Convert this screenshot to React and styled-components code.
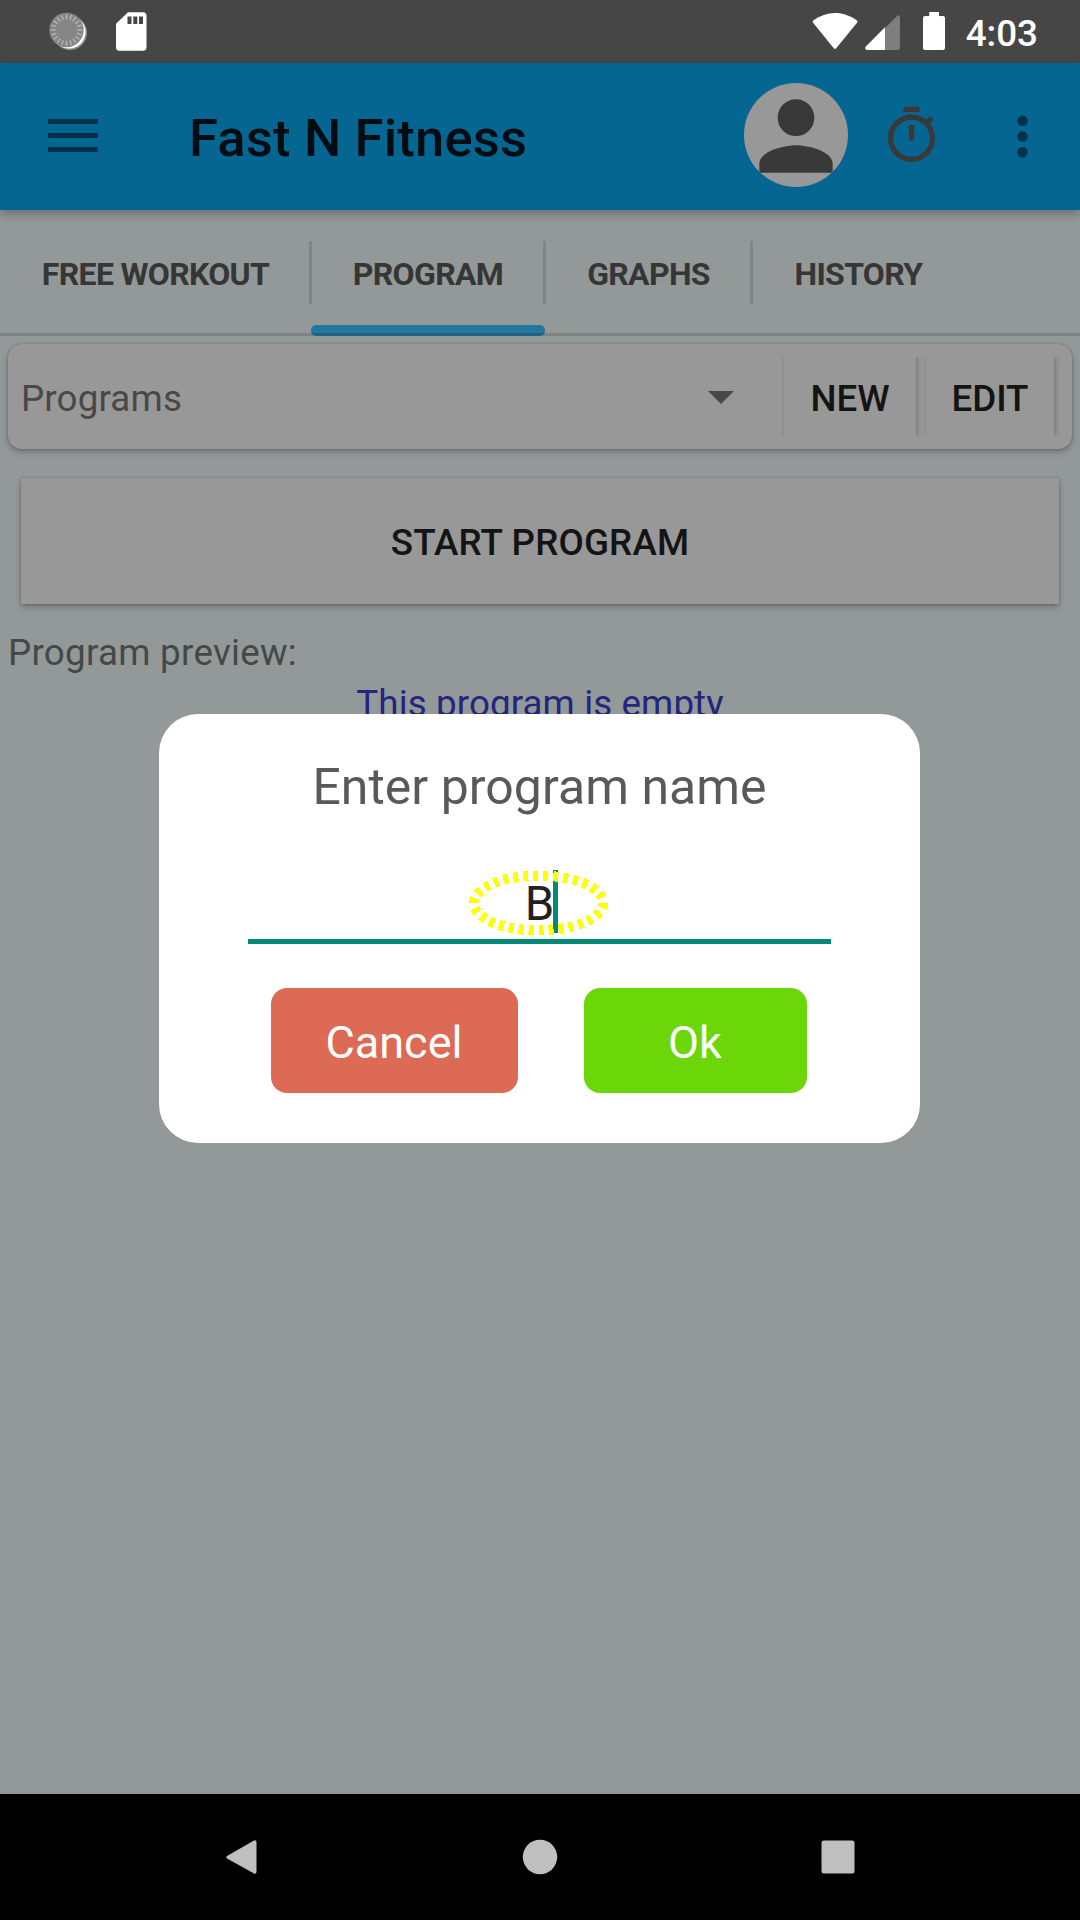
import React from "react";
import styled, { createGlobalStyle } from "styled-components";

const GlobalStyle = createGlobalStyle`
  * { box-sizing: border-box; }
  body { margin: 0; background: #000; font-family: Roboto, "Noto Sans", sans-serif; }
  button { font-family: inherit; border: 0; padding: 0; margin: 0; }
  svg { display: block; flex: none; }
`;

const Screen = styled.div`
  position: relative;
  width: 1080px;
  height: 1920px;
  display: flex;
  flex-direction: column;
  overflow: hidden;
`;

const StatusBar = styled.header`
  height: 63px;
  flex: none;
  display: flex;
  align-items: flex-start;
  justify-content: space-between;
  padding: 0 42px 0 49px;
  background: #464646;
`;

const StatusGroup = styled.div`
  display: flex;
  align-items: flex-start;
`;

const Clock = styled.span`
  margin-left: 19.5px;
  padding-top: 12px;
  font-size: 36.75px;
  line-height: 43px;
  font-weight: 500;
  color: #fff;
`;

const AppBar = styled.div`
  position: relative;
  z-index: 1;
  height: 147px;
  flex: none;
  display: flex;
  align-items: center;
  padding: 0 26px 0 48px;
  background: #066692;
  box-shadow: 0 4px 10px rgba(0, 0, 0, 0.28);
`;

const MenuIcon = styled.div`
  display: flex;
  flex-direction: column;
  gap: 9px;
  width: 50px;
  margin-top: -2px;
  span {
    height: 5px;
    background: #033148;
  }
`;

const AppTitle = styled.h1`
  flex: 1;
  margin: 3px 0 0 91px;
  font-size: 52.5px;
  line-height: 62px;
  font-weight: 500;
  letter-spacing: 0.2px;
  color: #020c12;
`;

const Avatar = styled.div`
  display: flex;
  align-items: center;
  justify-content: center;
  width: 104px;
  height: 104px;
  margin: -4px 32px 0 0;
  padding-top: 2px;
  border-radius: 50%;
  background: #989898;
  overflow: hidden;
`;

const Content = styled.main`
  flex: 1;
  background: #939998;
`;

const Tabs = styled.nav`
  display: flex;
  height: 126px;
  background: linear-gradient(#7e8382, #7e8382) bottom / 100% 3px no-repeat;
`;

const Tab = styled.div`
  position: relative;
  display: flex;
  align-items: center;
  justify-content: center;
  width: ${(p) => p.$width}px;
  padding-top: 1px;
  font-size: 32px;
  font-weight: 700;
  letter-spacing: -0.68px;
  color: #363636;

  &:not(:last-child)::after {
    content: "";
    position: absolute;
    top: 31px;
    right: -1px;
    width: 3px;
    height: 63px;
    background: #808585;
  }

  ${(p) =>
    p.$active &&
    `&::before {
      content: "";
      position: absolute;
      left: 0;
      right: 0;
      bottom: 0;
      height: 11px;
      border-radius: 5px;
      background: linear-gradient(#24779f 8px, #1f6387 8px);
    }`}
`;

const PickerCard = styled.section`
  display: flex;
  align-items: center;
  height: 105px;
  margin: 8px 8px 0;
  padding: 0 18px 0 13px;
  border-radius: 14px;
  background: #989898;
  box-shadow: 0 3px 6px rgba(0, 0, 0, 0.25), 0 0 2px rgba(0, 0, 0, 0.25);
`;

const PickerValue = styled.span`
  flex: 1;
  padding-top: 3px;
  font-size: 36.75px;
  line-height: 43px;
  letter-spacing: 0.15px;
  color: #484848;
`;

const CardButton = styled.button`
  height: 79px;
  width: ${(p) => p.$width}px;
  margin-left: ${(p) => p.$gap}px;
  padding-top: 3px;
  font-size: 36.75px;
  font-weight: 500;
  color: #141414;
  background: #989898;
  box-shadow: 2px 0 4px rgba(0, 0, 0, 0.18), -1px 0 3px rgba(0, 0, 0, 0.08);
  clip-path: inset(0 -8px);
`;

const StartButton = styled.button`
  display: block;
  width: 1038px;
  height: 126px;
  margin: 29px 21px 0;
  padding-top: 3px;
  font-size: 36.75px;
  font-weight: 500;
  letter-spacing: 0.15px;
  color: #141414;
  background: #989898;
  box-shadow: 0 3px 6px rgba(0, 0, 0, 0.25), 0 0 2px rgba(0, 0, 0, 0.25);
`;

const PreviewLabel = styled.p`
  margin: 27px 0 0 8px;
  font-size: 36.75px;
  line-height: 43px;
  letter-spacing: 0.27px;
  color: #444948;
`;

const EmptyNote = styled.p`
  margin: 8px 0 0;
  font-size: 36.75px;
  line-height: 43px;
  letter-spacing: 0.1px;
  text-align: center;
  color: #24257f;
`;

const NavBar = styled.footer`
  height: 126px;
  flex: none;
  display: flex;
  align-items: center;
  padding: 0 0 0 225px;
  background: #000;
  svg:nth-child(2) { margin-left: 264.5px; }
  svg:nth-child(3) { margin-left: 263.5px; }
`;

const ModalLayer = styled.div`
  position: absolute;
  z-index: 2;
  inset: 63px 1px 126px 0;
  display: flex;
  align-items: center;
  justify-content: center;
`;

const Dialog = styled.div`
  position: relative;
  width: 761px;
  height: 429px;
  border-radius: 39px;
  background: #fff;
  display: flex;
  flex-direction: column;
  align-items: center;
`;

const DialogTitle = styled.h2`
  margin: 43px 0 0;
  font-size: 49.9px;
  line-height: 60px;
  font-weight: 400;
  letter-spacing: 0.07px;
  color: #595959;
`;

const Field = styled.div`
  display: flex;
  justify-content: center;
  width: 583px;
  height: 77px;
  margin-top: 50px;
  padding-top: 3px;
  border-bottom: 5px solid #048977;
  font-size: 47.25px;
  line-height: 69px;
  color: #212121;
`;

const Caret = styled.span`
  width: 5px;
  height: 63px;
  margin: 0 -4px 0 -1px;
  background: #048977;
`;

const FocusRing = styled.svg`
  position: absolute;
  left: 305px;
  top: 151px;
`;

const Actions = styled.div`
  display: flex;
  gap: 66px;
  margin: 44px 2px 0 0;
`;

const ActionButton = styled.button`
  width: ${(p) => p.$width}px;
  height: 105px;
  padding-top: 4px;
  border-radius: 16px;
  font-size: 45px;
  color: #fff;
  background: ${(p) => p.$color};
`;

const SyncIcon = () => {
  const ticks = Array.from({ length: 20 }, (_, i) => i * 18);
  return (
    <svg width="40" height="63" viewBox="49 0 40 63">
      <circle cx="70" cy="33" r="17" fill="#909090" />
      <circle cx="69" cy="32" r="16.6" fill="#fff" />
      <circle cx="66.5" cy="30" r="17.2" fill="#858585" />
      {ticks.map((a) => (
        <path key={a} d="M66.5 14.2v5" stroke="#b8b8b8" strokeWidth="1.3" transform={`rotate(${a} 66.5 30)`} />
      ))}
    </svg>
  );
};

const SdSvg = styled.svg`
  margin-left: 26px;
`;

const SdIcon = () => (
  <SdSvg width="33" height="63" viewBox="115 0 33 63">
    <path
      fill="#fff"
      fillRule="evenodd"
      d="M128 12.300h15a3.500 3.500 0 0 1 3.500 3.500v31.500a3.500 3.500 0 0 1-3.500 3.500h-23.500a3.500 3.500 0 0 1-3.500-3.500v-23.500zM127.500 16.500v7.500h4v-7.500zM133.300 16.500v7.500h4v-7.500zM139 16.500v7.500h4v-7.500z"
    />
  </SdSvg>
);

const StatusIcons = () => (
  <svg width="135" height="63" viewBox="811 0 135 63">
    <path
      fill="#fff"
      d="M813.200 20.500C820 15.500 827.300 13 835 13s15.200 2.500 22 7.500q.8 1 .2 2L836.200 48.300q-1.200 1.300-2.400 0L812.900 22.500q-.5-1 .3-2z"
    />
    <path fill="#7f7f7f" d="M885 28l12.400-12.300q2.400-1.500 2.500 1.300v31q0 2-2 2H885z" />
    <path fill="#fff" d="M885 27.200V50h-18q-3-.8-1.200-3.400z" />
    <path
      fill="#fff"
      d="M929.200 12h9.800v4h4q2 0 2 2v30q0 2-2 2h-18q-2 0-2-2V18q0-2 2-2h4.200z"
    />
  </svg>
);

const PersonIcon = () => (
  <svg width="110" height="110" viewBox="0 0 24 24" fill="#393939">
    <path d="M12 12c2.210 0 4-1.790 4-4s-1.790-4-4-4-4 1.790-4 4 1.790 4 4 4zm0 2c-2.670 0-8 1.340-8 4v2h16v-2c0-2.660-5.330-4-8-4z" />
  </svg>
);

const TimerSvg = styled.svg`
  margin-top: -3px;
`;

const TimerIcon = () => (
  <TimerSvg width="63" height="63" viewBox="0 0 24 24" fill="#393939">
    <path d="M15 1H9v2h6V1zm-4 13h2V8h-2v6zm8.030-6.610l1.420-1.420c-.43-.51-.9-.99-1.410-1.410l-1.420 1.420A8.962 8.962 0 0 0 12 4c-4.970 0-9 4.030-9 9s4.020 9 9 9a8.994 8.994 0 0 0 7.030-14.610zM12 20c-3.870 0-7-3.130-7-7s3.130-7 7-7 7 3.130 7 7-3.130 7-7 7z" />
  </TimerSvg>
);

const MoreSvg = styled.svg`
  margin-left: 48px;
`;

const MoreIcon = () => (
  <MoreSvg width="63" height="63" viewBox="0 0 24 24" fill="#033148">
    <circle cx="12" cy="6" r="2" />
    <circle cx="12" cy="12" r="2" />
    <circle cx="12" cy="18" r="2" />
  </MoreSvg>
);

const DropSvg = styled.svg`
  margin-top: 2px;
`;

const DropIcon = () => (
  <DropSvg width="26" height="13" viewBox="0 0 26 13">
    <path d="M0 0h26L13 13z" fill="#484848" />
  </DropSvg>
);

const tabs = [
  { label: "FREE WORKOUT", width: 311 },
  { label: "PROGRAM", width: 234, active: true },
  { label: "GRAPHS", width: 207 },
  { label: "HISTORY", width: 213 },
];

export default function App() {
  return (
    <Screen>
      <GlobalStyle />
      <StatusBar>
        <StatusGroup>
          <SyncIcon />
          <SdIcon />
        </StatusGroup>
        <StatusGroup>
          <StatusIcons />
          <Clock>4:03</Clock>
        </StatusGroup>
      </StatusBar>
      <AppBar>
        <MenuIcon>
          <span />
          <span />
          <span />
        </MenuIcon>
        <AppTitle>Fast N Fitness</AppTitle>
        <Avatar>
          <PersonIcon />
        </Avatar>
        <TimerIcon />
        <MoreIcon />
      </AppBar>
      <Content>
        <Tabs>
          {tabs.map((t) => (
            <Tab key={t.label} $width={t.width} $active={t.active}>
              {t.label}
            </Tab>
          ))}
        </Tabs>
        <PickerCard>
          <PickerValue>Programs</PickerValue>
          <DropIcon />
          <CardButton $width={132} $gap={50}>NEW</CardButton>
          <CardButton $width={128} $gap={10}>EDIT</CardButton>
        </PickerCard>
        <StartButton>START PROGRAM</StartButton>
        <PreviewLabel>Program preview:</PreviewLabel>
        <EmptyNote>This program is empty</EmptyNote>
      </Content>
      <NavBar>
        <svg width="32" height="36" viewBox="0 0 32 36">
          <path d="M29 1.500L2 17q-1.500 1.200 0 2.400L29 34.500q2.300.8 2.500-1.500V3q-.2-2.300-2.500-1.500z" fill="#bfbfbf" />
        </svg>
        <svg width="36" height="36" viewBox="0 0 36 36">
          <circle cx="18" cy="18" r="17.200" fill="#bfbfbf" />
        </svg>
        <svg width="34" height="34" viewBox="0 0 34 34">
          <rect x=".5" y=".5" width="33" height="33" rx="2.500" fill="#bfbfbf" />
        </svg>
      </NavBar>
      <ModalLayer>
        <Dialog role="dialog">
          <DialogTitle>Enter program name</DialogTitle>
          <Field>
            B
            <Caret />
          </Field>
          <FocusRing width="150" height="76" viewBox="0 0 150 76">
            <ellipse
              cx="74.500"
              cy="38"
              rx="64.500"
              ry="27.500"
              fill="none"
              stroke="#ff0"
              strokeWidth="10"
              strokeDasharray="5 5"
              shapeRendering="crispEdges"
            />
          </FocusRing>
          <Actions>
            <ActionButton $width={247} $color="#dd6a55">Cancel</ActionButton>
            <ActionButton $width={223} $color="#6bd708">Ok</ActionButton>
          </Actions>
        </Dialog>
      </ModalLayer>
    </Screen>
  );
}
